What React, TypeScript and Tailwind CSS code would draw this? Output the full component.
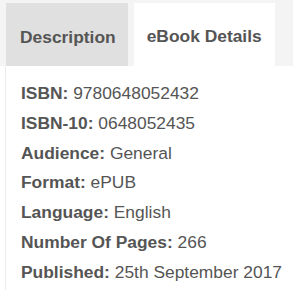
export default function App() {
  const rows: [string, string][] = [
    ["ISBN:", "9780648052432"],
    ["ISBN-10:", "0648052435"],
    ["Audience:", "General"],
    ["Format:", "ePUB"],
    ["Language:", "English"],
    ["Number Of Pages:", "266"],
    ["Published:", "25th September 2017"],
  ];

  return (
    <div className="w-[293px] h-[290px] bg-white overflow-hidden font-['Liberation_Sans',Arial,sans-serif] text-[#555]">
      {/* Tabs */}
      <div className="flex h-[66px] bg-[#f4f4f4] pt-[3px] pl-[6px] gap-[6px]">
        <div className="bg-[#e0e0e0] pl-[14px] pr-[12px] flex items-center pt-[5px] text-[17.4px] font-bold">
          Description
        </div>
        <div className="bg-white px-[13px] flex items-center pt-[3px] text-[17.4px] font-bold">
          eBook Details
        </div>
      </div>

      {/* Details */}
      <div className="ml-[5px] border-l border-[#ececec] pl-[15px] pt-[13px] h-full">
        {rows.map(([k, v]) => (
          <div key={k} className="text-[17.4px] leading-[29.8px] whitespace-nowrap">
            <span className="font-bold">{k}</span> {v}
          </div>
        ))}
      </div>
    </div>
  );
}
